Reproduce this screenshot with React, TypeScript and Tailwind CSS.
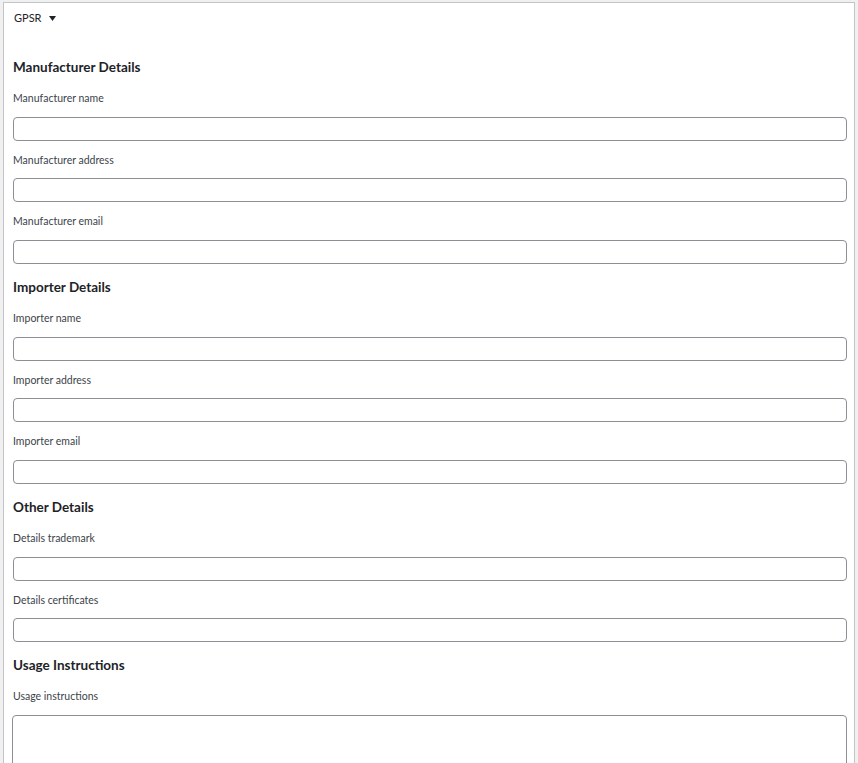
import type { ReactNode } from 'react';

/* ------------------------------------------------------------------ */
/*  Field definitions                                                  */
/* ------------------------------------------------------------------ */
type Section = {
  title: string;
  fields: string[];
};

const sections: Section[] = [
  {
    title: 'Manufacturer Details',
    fields: ['Manufacturer name', 'Manufacturer address', 'Manufacturer email'],
  },
  {
    title: 'Importer Details',
    fields: ['Importer name', 'Importer address', 'Importer email'],
  },
  {
    title: 'Other Details',
    fields: ['Details trademark', 'Details certificates'],
  },
];

const font = { fontFamily: 'Lato, "Noto Sans", Arial, sans-serif' };

function Heading({ children }: { children: ReactNode }) {
  return (
    <h3 className="mb-[13px] text-[13.5px] font-bold leading-[20px] text-[#1d2327]">
      {children}
    </h3>
  );
}

function Label({ children }: { children: ReactNode }) {
  return (
    <label className="mb-[10.5px] block text-[10.5px] leading-[16px] text-[#3c434a]">
      {children}
    </label>
  );
}

function Field({ label }: { label: string }) {
  return (
    <div className="mb-[11px] flex flex-col">
      <Label>{label}</Label>
      <input
        type="text"
        className="block h-[24px] w-full rounded-[4px] border border-[#8c8f94] bg-white px-2 text-[12px] outline-none"
      />
    </div>
  );
}

export default function App() {
  return (
    <div className="h-screen overflow-hidden bg-[#f0f0f1] pl-[3px] pr-[3px] pt-[2px]" style={font}>
      <div className="h-[800px] border border-[#c3c4c7] bg-white">
        {/* ---------- header ---------- */}
        <div className="flex h-[29px] items-center gap-[7px] pl-[10px]">
          <span className="text-[11px] leading-[16px] text-[#1d2327]">GPSR</span>
          <svg width="7" height="5" viewBox="0 0 7 5" className="mt-px">
            <path d="M0 0h7L3.5 5z" fill="#1d2327" />
          </svg>
        </div>

        {/* ---------- body ---------- */}
        <div className="flex flex-col pl-[9px] pr-[7px] pt-[25px]">
          {sections.map((s, i) => (
            <div key={s.title} className={`flex flex-col ${i === 0 ? '' : 'mt-[2.5px]'}`}>
              <Heading>{s.title}</Heading>
              {s.fields.map((f) => (
                <Field key={f} label={f} />
              ))}
            </div>
          ))}

          <div className="mt-[2px] flex flex-col">
            <Heading>Usage Instructions</Heading>
            <Label>Usage instructions</Label>
            <textarea className="-ml-px block h-[90px] w-[calc(100%+1px)] resize-none rounded-[4px] border border-[#8c8f94] bg-white outline-none" />
          </div>
        </div>
      </div>
    </div>
  );
}
